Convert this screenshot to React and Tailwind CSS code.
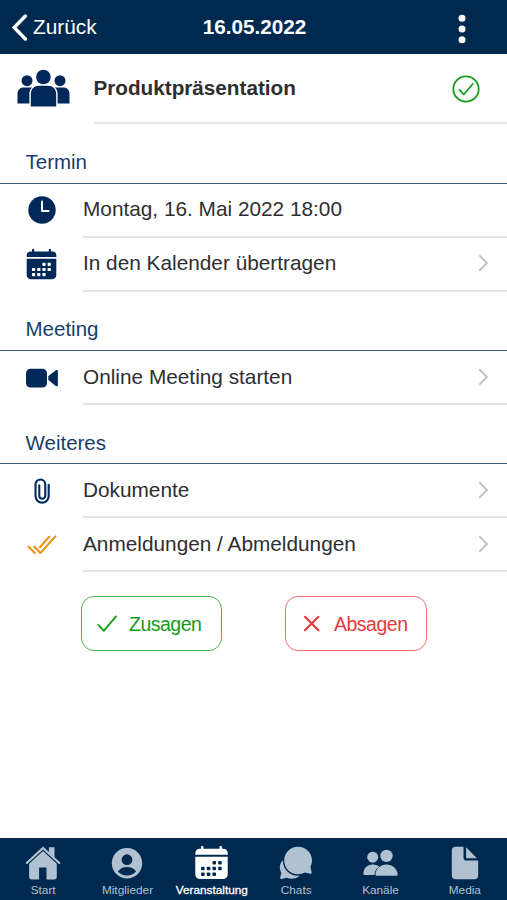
import React from 'react';

const BackIcon = () => (
  <svg className="h-[30px] w-[18px]" viewBox="0 0 18 30" fill="none" stroke="currentColor" strokeWidth="3.4">
    <path d="M15.4 4L4.2 15.5L15.4 27" strokeLinecap="round" strokeLinejoin="miter" />
  </svg>
);

const DotsIcon = () => (
  <svg className="h-[30px] w-[8px]" viewBox="0 0 8 30" fill="currentColor">
    <circle cx="4" cy="4.3" r="3.5" />
    <circle cx="4" cy="15" r="3.5" />
    <circle cx="4" cy="25.7" r="3.5" />
  </svg>
);

const GroupIcon = () => (
  <svg className="h-[38px] w-[53px]" viewBox="0 0 53 38" fill="currentColor">
    <circle cx="10" cy="11.7" r="5.5" />
    <circle cx="43" cy="11.7" r="5.5" />
    <path d="M.5 34.5V25C.5 20.5 3.5 18.6 7 18.6h8.2C13.2 20.2 12.4 22.4 12.4 25v9.5z" />
    <path d="M52.5 34.5V25c0-4.5-3-6.4-6.5-6.4h-8.2c2 1.6 2.8 3.8 2.8 6.4v9.5z" />
    <circle cx="26.4" cy="8" r="7.3" />
    <path d="M13.8 37.5V25.5c0-5.4 3.4-8.7 8.5-8.7h8.4c5.1 0 8.5 3.3 8.5 8.7v12z" />
  </svg>
);

const CheckCircleIcon = () => (
  <svg className="h-7 w-7" viewBox="0 0 28 28" fill="none" stroke="currentColor" strokeWidth="1.8" strokeLinecap="round" strokeLinejoin="round">
    <circle cx="14" cy="14" r="12.7" />
    <path d="M7.5 14.8l4.2 4.7L20.7 9" />
  </svg>
);

const ClockIcon = () => (
  <svg className="h-7 w-7" viewBox="0 0 28 28">
    <circle cx="14" cy="14" r="13.7" fill="currentColor" />
    <path d="M14 5.6V15h6.6" fill="none" stroke="white" strokeWidth="2" strokeLinecap="round" strokeLinejoin="round" />
  </svg>
);

const calendarDots = [
  [18, 15.3], [23.2, 15.3],
  [7.6, 20.5], [12.8, 20.5], [18, 20.5], [23.2, 20.5],
  [7.6, 25.7], [12.8, 25.7], [18, 25.7],
];

const CalendarIcon = ({ className, dot }) => (
  <svg className={className} viewBox="0 0 31 31" fill="currentColor">
    <path d="M.7 7.9V6.500a4 4 0 0 1 4-4H6V1a1 1 0 0 1 2.200 0v1.500h14.600V1A1 1 0 0 1 25 1v1.500h1.300a4 4 0 0 1 4 4v1.400z" />
    <path d="M.7 9.700h29.600v16.200a4.300 4.300 0 0 1-4.300 4.300H5a4.300 4.300 0 0 1-4.300-4.300z" />
    {calendarDots.map(([x, y]) => (
      <rect key={`${x}-${y}`} x={x - 1.6} y={y - 1.6} width="3.2" height="3.2" rx="0.7" className={dot} />
    ))}
  </svg>
);

const VideoIcon = () => (
  <svg className="h-5 w-8" viewBox="0 0 32 20" fill="currentColor">
    <rect x="0" y="0.7" width="21" height="18.8" rx="4.6" />
    <path d="M22.3 8.100v4l7.400 5.800c1 .7 2.200.2 2.200-1V3.400c0-1.200-1.200-1.700-2.200-1z" />
  </svg>
);

const ClipIcon = () => (
  <svg className="h-[26px] w-[18px]" viewBox="0 0 18 26" fill="none" stroke="currentColor" strokeWidth="2.1" strokeLinecap="round">
    <path d="M15.700 6.800v11.200a6.600 6.600 0 0 1-13.200 0V6.400a4.900 4.900 0 0 1 9.800 0v11.300a3 3 0 0 1-6 0V7.400" />
  </svg>
);

const DoubleCheckIcon = () => (
  <svg className="h-5 w-[30px]" viewBox="0 0 30 20" fill="none" stroke="currentColor" strokeWidth="2.1" strokeLinecap="round" strokeLinejoin="round">
    <path d="M1.600 11.800L7.800 18" />
    <path d="M7.400 11.800L13.400 18L28.400 1.400" />
    <path d="M13 12.300L22.200 1.800" />
  </svg>
);

const ChevronIcon = () => (
  <svg className="h-[18px] w-[11px] text-[#c4c4c6]" viewBox="0 0 11 18" fill="none" stroke="currentColor" strokeWidth="2">
    <path d="M1.300 1.300L9 9L1.300 16.700" />
  </svg>
);

const navItems = [
  {
    label: 'Start',
    icon: (
      <svg className="h-[34px] w-9" viewBox="0 0 36 34" fill="currentColor">
        <path d="M18 .6L1 16.200a1 1 0 0 0 1.500 1.500L18 3.600l15.500 14.100a1 1 0 0 0 1.500-1.500l-5.500-5V1.300h-5.600v4.800z" />
        <path d="M18 5.100L4.100 17.800v12.900a2.700 2.700 0 0 0 2.700 2.700h7.300V21.500h7.400v11.900h7.600a2.700 2.700 0 0 0 2.700-2.700V17.800z" />
      </svg>
    ),
  },
  {
    label: 'Mitglieder',
    icon: (
      <svg className="h-[34px] w-[34px]" viewBox="0 0 34 34">
        <circle cx="17" cy="17.300" r="15.200" fill="currentColor" />
        <circle cx="17" cy="13.700" r="5.400" className="fill-[#00294f]" />
        <path d="M7.900 25.400C9.900 22.300 13.200 20.900 17 20.900s7.100 1.400 9.100 4.500A12.400 12.400 0 0 1 17 29.400a12.400 12.400 0 0 1-9.100-4z" className="fill-[#00294f]" />
      </svg>
    ),
  },
  {
    label: 'Veranstaltung',
    active: true,
    icon: <CalendarIcon className="h-[34px] w-[35px]" dot="fill-[#00294f]" />,
  },
  {
    label: 'Chats',
    icon: (
      <svg className="h-[34px] w-[34px]" viewBox="0 0 34 34" fill="currentColor">
        <path d="M3.900 14.300C1.800 16.300.7 19 .8 21.800c.1 1.800.6 3.400 1.500 4.900L1.200 31.500c-.2 1 .7 1.800 1.600 1.500l5-1.200c4.600 1.900 9.700 1.100 13-2.200C12 31 3.600 24 3.900 14.300z" />
        <path d="M19 .7c7.700 0 14 6 14 13.700 0 2.300-.6 4.400-1.600 6.300l1.300 5.500c.2.900-.6 1.700-1.500 1.500l-5.100-1.300A13.700 13.700 0 0 1 19 28.200C11.300 28.200 5.200 22 5.200 14.400 5.200 6.800 11.300.7 19 .7z" />
      </svg>
    ),
  },
  {
    label: 'Kanäle',
    icon: (
      <svg className="h-[34px] w-[35px]" viewBox="0 0 35 34" fill="currentColor">
        <circle cx="9.700" cy="11.200" r="5.500" />
        <circle cx="23.500" cy="9.900" r="6.200" />
        <path d="M.4 27.700c0-5.500 4-9.200 9.300-9.200 2.600 0 4.900.7 6.700 2-2.900 1.800-4.500 4.300-5 7.900a1 1 0 0 1-1 .7H1.500a1.200 1.200 0 0 1-1.100-1.400z" />
        <path d="M12.400 28.300c.4-5.700 5-9.900 11.100-9.900s10.700 4.200 11.200 9.900c.1.900-.5 1.500-1.300 1.500H13.700c-.8 0-1.400-.6-1.300-1.500z" />
      </svg>
    ),
  },
  {
    label: 'Media',
    icon: (
      <svg className="h-[34px] w-7" viewBox="0 0 28 34" fill="currentColor">
        <path d="M12.500.7H4.800A4 4 0 0 0 .8 4.700v24.500a4 4 0 0 0 4 4h18.400a4 4 0 0 0 4-4V14.600H15.700a3.200 3.200 0 0 1-3.200-3.200z" />
        <path d="M15.100 1.200v9.800c0 .7.6 1.300 1.300 1.300H26z" />
      </svg>
    ),
  },
];

const SectionTitle = ({ children, className }) => (
  <div className={`flex items-center border-b border-[#3b5d80] pl-[25.5px] text-[20.5px] text-[#173d6b] ${className}`}>
    <span>{children}</span>
  </div>
);

const Row = ({ icon, label, arrow, raised }) => (
  <div className="flex h-[54px]">
    <div className={`flex w-[83px] shrink-0 items-center justify-center text-[#00295a] ${raised ? 'pb-[2px]' : ''}`}>{icon}</div>
    <div className={`flex grow items-center justify-between border-b-2 border-[#e3e3e4] pr-[18px] ${raised ? 'pb-[2px]' : ''}`}>
      <span className="text-[20.8px] whitespace-nowrap">{label}</span>
      {arrow && <ChevronIcon />}
    </div>
  </div>
);

const App = () => {
  return (
    <div className="flex h-[900px] w-[507px] flex-col overflow-hidden bg-white font-['Liberation_Sans',Arial,sans-serif] leading-6 text-[#2e2e30]">
      <header className="grid h-[54px] shrink-0 grid-cols-3 items-center bg-[#00294f] text-white">
        <div className="flex items-center gap-[5px] pl-[10px] text-[20.8px]">
          <BackIcon />
          <span>Zurück</span>
        </div>
        <h1 className="pl-[2px] text-center text-[20.7px] font-bold">16.05.2022</h1>
        <div className="flex justify-end pt-[3px] pr-[41px]">
          <DotsIcon />
        </div>
      </header>

      <main className="grow">
        <div className="flex h-[70px]">
          <div className="flex w-[93.5px] shrink-0 items-center pb-[2px] pl-[17px] text-[#00295a]">
            <GroupIcon />
          </div>
          <div className="flex grow items-center justify-between border-b-2 border-[#e6e6e7] pr-[27px]">
            <h2 className="text-[20.7px] font-bold">Produktpräsentation</h2>
            <span className="pt-[1px] text-[#169b18]">
              <CheckCircleIcon />
            </span>
          </div>
        </div>

        <SectionTitle className="h-[60px] pt-[17px]">Termin</SectionTitle>
        <Row icon={<ClockIcon />} label="Montag, 16. Mai 2022 18:00" raised />
        <Row icon={<CalendarIcon className="h-[31px] w-[31px]" dot="fill-white" />} label="In den Kalender übertragen" arrow raised />

        <SectionTitle className="h-[59px] pt-[15px]">Meeting</SectionTitle>
        <Row icon={<VideoIcon />} label="Online Meeting starten" arrow />

        <SectionTitle className="h-[59px] pt-[17px]">Weiteres</SectionTitle>
        <Row icon={<ClipIcon />} label="Dokumente" arrow />
        <Row icon={<DoubleCheckIconOrange />} label="Anmeldungen / Abmeldungen" arrow />

        <div className="flex gap-[63px] pt-6 pl-[81px]">
          <button className="flex h-[55px] w-[141px] items-center gap-3 rounded-[13px] border border-[#52b154] pl-[15px] text-[19.5px] tracking-[-0.5px] text-[#169b18]">
            <svg className="h-5 w-5" viewBox="0 0 20 20" fill="none" stroke="currentColor" strokeWidth="1.8" strokeLinecap="round" strokeLinejoin="round">
              <path d="M1.400 10.800L6.800 16.800L19 2.400" />
            </svg>
            Zusagen
          </button>
          <button className="flex h-[55px] w-[142px] items-center gap-3 rounded-[13px] border border-[#ee6c6c] pl-4 text-[19.5px] tracking-[-0.5px] text-[#e23b3b]">
            <svg className="h-5 w-5" viewBox="0 0 20 20" fill="none" stroke="currentColor" strokeWidth="2.2" strokeLinecap="round">
              <path d="M3 2.800L16.400 16.200M16.400 2.800L3 16.200" />
            </svg>
            Absagen
          </button>
        </div>
      </main>

      <nav className="grid h-[62px] shrink-0 grid-cols-6 bg-[#00294f] pl-[1px]">
        {navItems.map((item) => (
          <div
            key={item.label}
            className={`flex flex-col items-center gap-[2px] pt-2 text-[11.8px] leading-[17px] ${item.active ? 'text-white' : 'text-[#b0c2d1]'}`}
          >
            {item.icon}
            <span className={item.active ? '[-webkit-text-stroke:0.3px_white]' : ''}>{item.label}</span>
          </div>
        ))}
      </nav>
    </div>
  );
};

const DoubleCheckIconOrange = () => (
  <span className="text-[#ee9315]">
    <DoubleCheckIcon />
  </span>
);

export default App;
